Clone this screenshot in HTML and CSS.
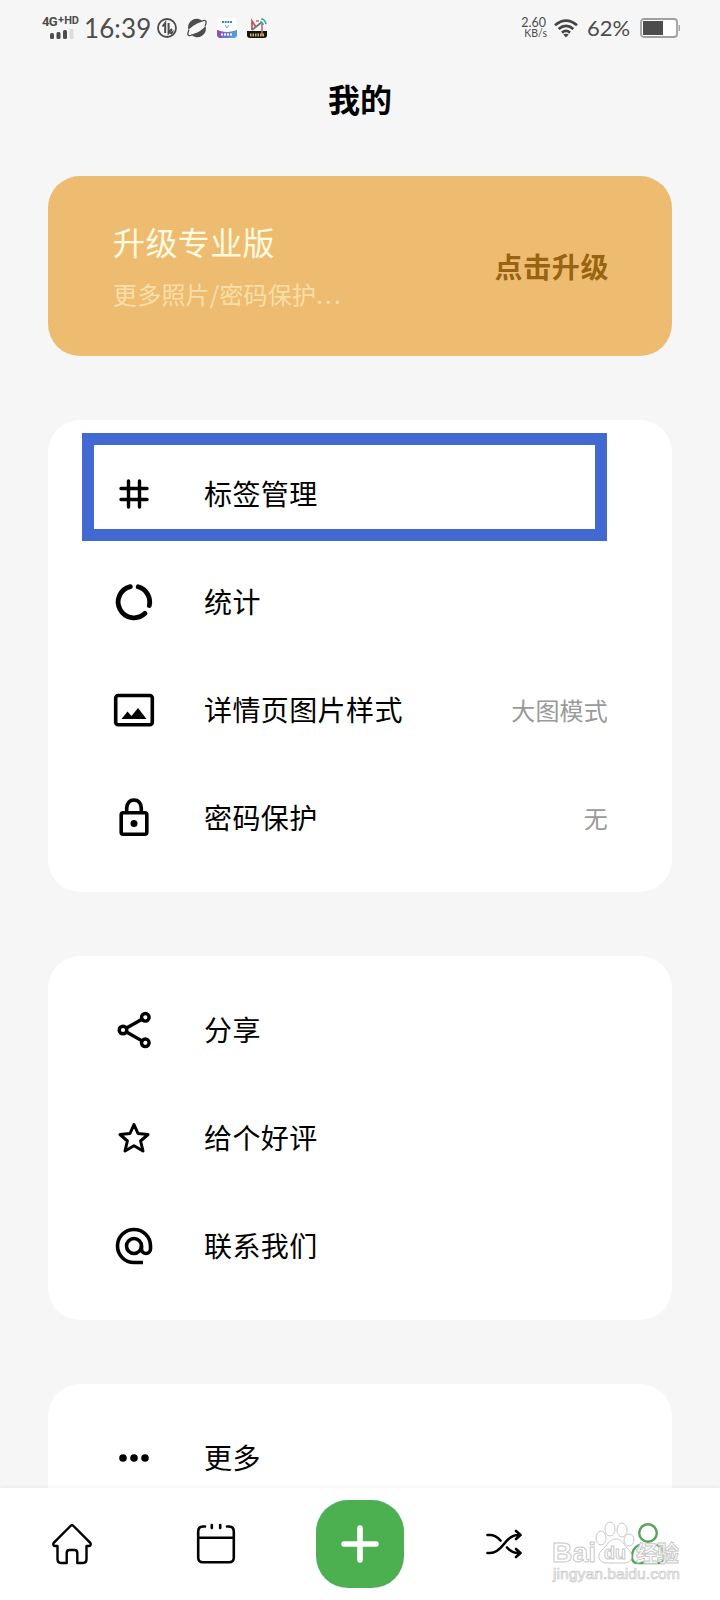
FILE: index.html
```html
<!DOCTYPE html>
<html lang="zh-CN">
<head>
    <meta charset="UTF-8">
    <meta name="viewport" content="width=device-width, initial-scale=1.0">
    <title>我的</title>
    <link rel="stylesheet" href="styles.css">
</head>
<body>
    <div class="status-bar">
        <div class="network">
            <div class="net-type"><span>4G</span><span class="plus">+</span><span class="hd">HD</span></div>
            <svg class="signal" width="24" height="11" viewBox="0 0 24 11">
                <rect x="0" y="5" width="4" height="6" rx="1.5" fill="#4d4d4d"/>
                <rect x="6.5" y="4" width="4" height="7" rx="1.5" fill="#4d4d4d"/>
                <rect x="13" y="2" width="4" height="9" rx="1.5" fill="#4d4d4d"/>
                <rect x="19.5" y="1" width="4" height="10" rx="1" fill="#dcdcdc"/>
            </svg>
        </div>
        <div class="time">16:39</div>
        <div class="notices">
            <svg width="20" height="20" viewBox="0 0 20 20" fill="none" stroke="#4d4d4d" stroke-width="1.8">
                <circle cx="10" cy="10" r="9"/>
                <path d="M5.5 8.5 8.2 5V15M11.6 5V15L15 11" stroke-width="2"/>
                <path d="M12 15 17 12 15 17Z" fill="#4d4d4d" stroke="none"/>
            </svg>
            <svg width="20" height="20" viewBox="0 0 20 20">
                <path d="M1.500 12A8.600 8.600 0 0 1 16 3.500C11 4.500 5 8 1.500 12Z" fill="#4d4d4d"/>
                <path d="M18.500 8A8.600 8.600 0 0 1 4 16.500C10 15.500 15 12 18.500 8Z" fill="#4d4d4d"/>
                <path d="M2 12C0 16 .5 19 5 17M15 3C19.500 1 20 4 18 8" fill="none" stroke="#4d4d4d" stroke-width="1.300"/>
            </svg>
            <svg width="20" height="20" viewBox="0 0 20 20">
                <rect width="20" height="20" rx="4" fill="#fff"/>
                <path d="M0 12Q10 16 20 12V16Q20 20 16 20H4Q0 20 0 16Z" fill="#6d78c8"/>
                <path d="M0 12Q3 14 7 14L5 20H4Q0 20 0 16Z" fill="#8a55b8"/>
                <path d="M14 14Q18 14 20 12V16Q20 20 16 20H12Z" fill="#559bd5"/>
                <path d="M5 4H15" stroke="#3f87a8" stroke-width="2" stroke-dasharray="2 .7"/>
                <path d="M8 7 10 10 12 7" fill="none" stroke="#79a8d8"/>
                <path d="M4 16.500H16" stroke="#fff" stroke-width="2" stroke-dasharray="2 1"/>
            </svg>
            <svg width="20" height="20" viewBox="0 0 20 20">
                <path d="M0 13H20V17Q20 20 17 20H3Q0 20 0 17Z" fill="#17140d"/>
                <path d="M5 12V3L9 9" fill="none" stroke="#bc5358" stroke-width="1.700"/>
                <path d="M5 12 15 4" stroke="#657d79" stroke-width="1.800"/>
                <path d="M9 3H12M15 6V18" stroke="#ce6564" stroke-width="1.600"/>
                <path d="M14 1Q18 1 19 6M13 4Q16 4 16 7" fill="none" stroke="#49a1a8" stroke-width="1.700"/>
                <path d="M3 17H17" stroke="#cbb650" stroke-width="3" stroke-dasharray="1.500 1"/>
            </svg>
        </div>
        <div class="speed"><span>2.60</span><span>KB/s</span></div>
        <svg class="wifi" width="24" height="19" viewBox="0 0 24 19" fill="none" stroke="#444" stroke-width="2.700">
            <path d="M1 6.300Q12-3 23 6.300M4.600 10Q12 3.800 19.400 10M8 13.600Q12 10.200 16 13.600"/>
            <path d="M9.300 15.600Q12 13.700 14.700 15.600L12 18.500Z" fill="#444" stroke="none"/>
        </svg>
        <div class="percent">62%</div>
        <svg class="battery" width="40" height="20" viewBox="0 0 40 20">
            <rect x="1" y="1" width="36" height="18" rx="3" fill="#fff" stroke="#a0a0a0" stroke-width="1.800"/>
            <rect x="3" y="3" width="20" height="14" fill="#4d4d4d"/>
            <path d="M39.300 7V13" stroke="#a0a0a0" stroke-width="1.300"/>
        </svg>
    </div>

    <h1>我的</h1>

    <main>
        <section class="promo">
            <div>
                <div class="promo-title">升级专业版</div>
                <div class="promo-desc">更多照片/密码保护<span class="more">...</span></div>
            </div>
            <div class="promo-btn">点击升级</div>
        </section>

        <section class="card">
            <div class="row selected">
                <svg class="icon" viewBox="0 0 40 40" stroke-width="3.400">
                    <path d="M14.500 7V33M25.500 7V33M7 14.500H33M7 25.500H33"/>
                </svg>
                <span class="label">标签管理</span>
            </div>
            <div class="row">
                <svg class="icon" viewBox="0 0 40 40" stroke-width="4.800">
                    <path d="M16.300 4.600A15.800 15.800 0 1 0 31 31.300M24.200 4.800A15.800 15.800 0 0 1 35.300 23.500"/>
                </svg>
                <span class="label">统计</span>
            </div>
            <div class="row">
                <svg class="icon" viewBox="0 0 40 40" stroke-width="3.600">
                    <rect x="1.700" y="5.500" width="36.600" height="29.200" rx="2.500"/>
                    <path d="M7.500 29 13.500 21.500 17.500 26 24 18 32.500 29Z" fill="#000" stroke="none"/>
                </svg>
                <span class="label">详情页图片样式</span>
                <span class="value">大图模式</span>
            </div>
            <div class="row">
                <svg class="icon" viewBox="0 0 40 40" stroke-width="3.600">
                    <rect x="7.200" y="14.700" width="25.600" height="21.600" rx="2"/>
                    <path d="M12.700 14V10Q13.500 2 20 2T27.300 10V14"/>
                    <circle cx="20" cy="25.500" r="3.500" fill="#000" stroke="none"/>
                </svg>
                <span class="label">密码保护</span>
                <span class="value">无</span>
            </div>
        </section>

        <section class="card">
            <div class="row">
                <svg class="icon" viewBox="0 0 40 40" stroke-width="3.400">
                    <circle cx="31.300" cy="7.300" r="3.800"/>
                    <circle cx="9" cy="20" r="3.800"/>
                    <circle cx="31.300" cy="32.800" r="3.800"/>
                    <path d="M12.500 18 28 9.200M12.500 22 28 30.900"/>
                </svg>
                <span class="label">分享</span>
            </div>
            <div class="row">
                <svg class="icon" viewBox="0 0 40 40" stroke-width="3">
                    <path d="M20 6.500 24 15.500 34 16.500 26.600 23 29 33 20 27.800 11 33 13.400 23 6 16.500 16 15.500Z"/>
                </svg>
                <span class="label">给个好评</span>
            </div>
            <div class="row">
                <svg class="icon" viewBox="0 0 40 40" stroke-width="3.600">
                    <circle cx="20" cy="20" r="7.500"/>
                    <path class="flat" d="M29 36.500H20A16.500 16.500 0 1 1 36.500 20V22.700C36.500 29 27.500 29 27.500 22.700V20"/>
                </svg>
                <span class="label">联系我们</span>
            </div>
        </section>

        <section class="card">
            <div class="row">
                <svg class="icon dots" viewBox="0 0 40 40">
                    <circle cx="9" cy="20" r="3.800"/>
                    <circle cx="20" cy="20" r="3.800"/>
                    <circle cx="31" cy="20" r="3.800"/>
                </svg>
                <span class="label">更多</span>
            </div>
        </section>
    </main>

    <nav>
        <a class="tab">
            <svg class="icon" viewBox="0 0 40 40" stroke-width="2.400">
                <path d="M18.500 2 1.700 18.800Q.5 21.500 3 22H5.500V35Q5.500 39 9 39H14.700V29Q14.700 26 17.500 26H22.500Q25.300 26 25.300 29V39H31Q34.500 39 34.500 35V22H37Q39.500 21.500 38.300 18.800L21.500 2Q20 .5 18.500 2Z"/>
            </svg>
        </a>
        <a class="tab">
            <svg class="icon" viewBox="0 0 40 40" stroke-width="2.600">
                <path d="M9 2.500H7Q2.200 2.500 2.200 7.500V33.500Q2.200 38.300 7 38.300H33Q37.800 38.300 37.800 33.500V7.500Q37.800 2.500 33 2.500H31M2.200 13.700H37.800M15.800 1V4M24.200 1V4"/>
            </svg>
        </a>
        <a class="tab">
            <span class="add">
                <svg class="icon" viewBox="0 0 40 40" stroke-width="5.600">
                    <path d="M20 4V36M4 20H36"/>
                </svg>
            </span>
        </a>
        <a class="tab">
            <svg class="icon" viewBox="0 0 40 40" stroke-width="2.600">
                <path d="M3.500 11H6Q11.500 11 16.500 16.500M3.500 29H6Q13 29 20 20T34 11H36.500M23 23.500Q28 29 34 29H36.500M32 7 36.500 11 32 15M32 25 36.500 29 32 33"/>
            </svg>
        </a>
        <a class="tab active">
            <svg class="icon" viewBox="0 0 40 40" stroke-width="2.400">
                <circle cx="20" cy="9" r="8.800"/>
                <path d="M11 21Q4 24 4 33Q4 39 9 39H31Q36 39 36 33Q36 24 29 21"/>
            </svg>
        </a>
    </nav>

    <svg class="watermark" width="132" height="68" viewBox="0 0 132 68">
        <g fill="#fff" fill-opacity=".9" stroke="#c9c9c9" stroke-width="1">
            <ellipse cx="49" cy="18" rx="5" ry="7"/>
            <ellipse cx="58" cy="9" rx="5" ry="7"/>
            <ellipse cx="70" cy="10" rx="5" ry="7"/>
            <ellipse cx="77" cy="20" rx="5" ry="6"/>
            <path d="M64 19C57 19 55 26 50 30C44 36 47 43 55 43H72C80 43 82 36 77 30C72 26 71 19 64 19Z"/>
            <text x="0" y="42" class="wm-latin" textLength="44" lengthAdjust="spacingAndGlyphs">Bai</text>
            <text x="52" y="39" class="wm-du" textLength="22" lengthAdjust="spacingAndGlyphs">du</text>
            <text x="84" y="41" class="wm-cn" textLength="43">经验</text>
            <text x="1" y="59" class="wm-url" textLength="127" lengthAdjust="spacingAndGlyphs">jingyan.baidu.com</text>
        </g>
    </svg>
</body>
</html>
```
FILE: styles.css
```css
* {
    box-sizing: border-box;
}

body {
    margin: 0;
    width: 720px;
    height: 1600px;
    overflow: hidden;
    position: relative;
    background: #f6f6f6;
    color: #000;
    font-family: "Noto Sans CJK SC", sans-serif;
}

.status-bar {
    display: flex;
    align-items: center;
    height: 56px;
    padding: 0 40px 0 42px;
    color: #4d4d4d;
    font-family: Roboto, sans-serif;
}

.network {
    width: 38px;
    height: 24px;
}

.net-type {
    display: flex;
    height: 12px;
    line-height: 12px;
    font-size: 13px;
    font-weight: 700;
    letter-spacing: -0.7px;
}

.net-type .plus {
    font-size: 11px;
    line-height: 8px;
    margin-left: 1px;
}

.net-type .hd {
    font-size: 11px;
    line-height: 9px;
    letter-spacing: -0.3px;
    margin-left: 1px;
}

.signal {
    display: block;
    margin-left: 8px;
}

.time {
    width: 77px;
    padding-left: 4px;
    font-family: Lato, sans-serif;
    font-size: 26px;
    font-weight: 400;
    letter-spacing: 0.1px;
    line-height: 56px;
    white-space: nowrap;
}

.notices {
    display: flex;
    gap: 10px;
}

.speed {
    display: flex;
    flex-direction: column;
    align-items: flex-end;
    margin-left: auto;
    margin-right: 7px;
    font-family: Lato, sans-serif;
    font-size: 10.5px;
    line-height: 11px;
}

.speed span:first-child {
    font-size: 12.5px;
    margin-right: 1px;
}

.percent {
    width: 53px;
    margin-left: 9px;
    padding-bottom: 1px;
    font-family: Lato, sans-serif;
    font-size: 22px;
}

h1 {
    margin: 0;
    height: 120px;
    padding-top: 18px;
    text-align: center;
    font-size: 32px;
    font-weight: 700;
    line-height: 48px;
}

main {
    display: flex;
    flex-direction: column;
    gap: 64px;
    padding: 0 48px;
}

.promo {
    display: flex;
    align-items: center;
    justify-content: space-between;
    height: 180px;
    padding: 0 63px 0 65px;
    border-radius: 32px;
    background: #eebc71;
}

.promo-title {
    margin-top: -3px;
    color: #fffbe0;
    font-size: 32px;
    line-height: 48px;
    letter-spacing: 0.4px;
}

.promo-desc {
    margin-top: 11px;
    color: #f8dfa9;
    font-size: 24px;
    line-height: 36px;
    letter-spacing: 0.2px;
}

.more {
    letter-spacing: 2.2px;
}

.promo-btn {
    margin-top: -1px;
    color: #986411;
    font-size: 28px;
    font-weight: 700;
    letter-spacing: 0.6px;
}

.card {
    padding: 20px 0;
    border-radius: 32px;
    background: #fff;
}

.row {
    display: flex;
    align-items: center;
    height: 108px;
    padding: 0 64px 0 66px;
}

.selected {
    position: relative;
}

.selected::after {
    content: "";
    box-sizing: border-box;
    position: absolute;
    left: 34px;
    right: 65px;
    top: -7px;
    height: 108px;
    border: 12px solid #4169d1;
}

.icon {
    display: block;
    width: 40px;
    height: 40px;
    fill: none;
    stroke: #000;
    stroke-linecap: round;
    stroke-linejoin: round;
    overflow: visible;
}

.icon .flat {
    stroke-linecap: butt;
}

.dots {
    fill: #000;
    stroke: none;
}

.label {
    margin-left: 50px;
    padding-bottom: 2px;
    font-size: 28px;
    font-weight: 400;
    letter-spacing: 0.4px;
}

.value {
    margin-left: auto;
    padding-bottom: 2px;
    color: #9a9a9a;
    font-size: 24px;
    letter-spacing: 0.2px;
}

nav {
    position: absolute;
    left: 0;
    right: 0;
    bottom: 0;
    display: flex;
    height: 112px;
    background: #fff;
    box-shadow: 0 -1px 4px rgba(0, 0, 0, 0.06);
}

.tab {
    flex: 1;
    display: flex;
    align-items: center;
    justify-content: center;
}

.add {
    display: flex;
    align-items: center;
    justify-content: center;
    width: 88px;
    height: 88px;
    border-radius: 32px;
    background: #4caf50;
}

.add .icon {
    stroke: #fff;
}

.active .icon {
    stroke: #56a35b;
}

.watermark {
    position: absolute;
    left: 552px;
    top: 1520px;
    overflow: visible;
}

.wm-latin, .wm-du {
    font: 700 28px "Liberation Sans", sans-serif;
}

.wm-du {
    font-size: 18px;
}

.wm-cn {
    font: 700 22px "Noto Sans CJK SC", sans-serif;
}

.wm-url {
    font: 15px "Liberation Sans", sans-serif;
    stroke-width: 0.7px;
}
```
